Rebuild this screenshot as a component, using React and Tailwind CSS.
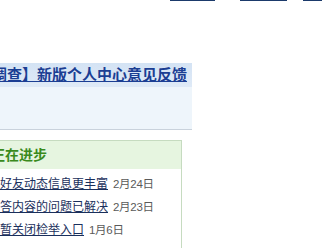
export default function App() {
  const news = [
    { title: '好友动态信息更丰富', date: '2月24日' },
    { title: '答内容的问题已解决', date: '2月23日' },
    { title: '暂关闭检举入口', date: '1月6日' },
  ];

  return (
    <div
      className="relative w-[322px] h-[248px] overflow-hidden bg-white"
      style={{ fontFamily: '"Liberation Sans", "Noto Sans CJK SC", sans-serif' }}
    >
      {/* top links, mostly scrolled above */}
      <div className="flex items-end h-[1px] pl-[170px] text-[12px] leading-[14px] whitespace-nowrap">
        <a className="inline-block overflow-hidden text-[#1b3a6b] underline w-[45px] mb-[-1px]">我的空间</a>
        <span className="inline-block overflow-hidden text-[#9aa7b8] ml-[4px] w-[21px] mb-[-1px]">设置</span>
        <a className="inline-block overflow-hidden text-[#1b3a6b] underline w-[47px] mb-[-1px]">消息通知</a>
        <span className="inline-block overflow-hidden text-[#9aa7b8] ml-[3px] w-[13px] mb-[-1px]">帮</span>
        <a className="inline-block overflow-hidden text-[#1b3a6b] underline w-[19px] mb-[-1px]">退出</a>
      </div>

      {/* feedback notice */}
      <div className="mt-[62px] w-[192px] border-b border-[#c9d2dc] bg-[#eef5fb]">
        <div className="h-[24px] bg-gradient-to-b from-[#d4e3f4] to-[#dfeaf7] flex items-center overflow-hidden">
          <a className="ml-[-53px] whitespace-nowrap text-[15px] leading-[18px] font-bold text-[#1b3e93] underline">
            【用户调查】新版个人中心意见反馈
          </a>
        </div>
        <div className="h-[42px]" />
      </div>

      {/* progress box */}
      <div className="mt-[10px] w-[182px] border-t border-r border-[#c6dbc0] h-[120px]">
        <div className="h-[28px] bg-[#e6f5e0] flex items-center overflow-hidden">
          <span className="ml-[-9px] whitespace-nowrap text-[14px] font-bold text-[#3a8a1c]">
            正在进步
          </span>
        </div>
        <ul className="pt-[4px] text-[12px] leading-[23px]">
          {news.map((n) => (
            <li key={n.title} className="flex items-baseline whitespace-nowrap">
              <a className="text-[#1a2f5c] underline">{n.title}</a>
              <span className="ml-[5px] text-[11.5px] tracking-[-0.3px] text-[#5a5a5a]">{n.date}</span>
            </li>
          ))}
        </ul>
      </div>
    </div>
  );
}
